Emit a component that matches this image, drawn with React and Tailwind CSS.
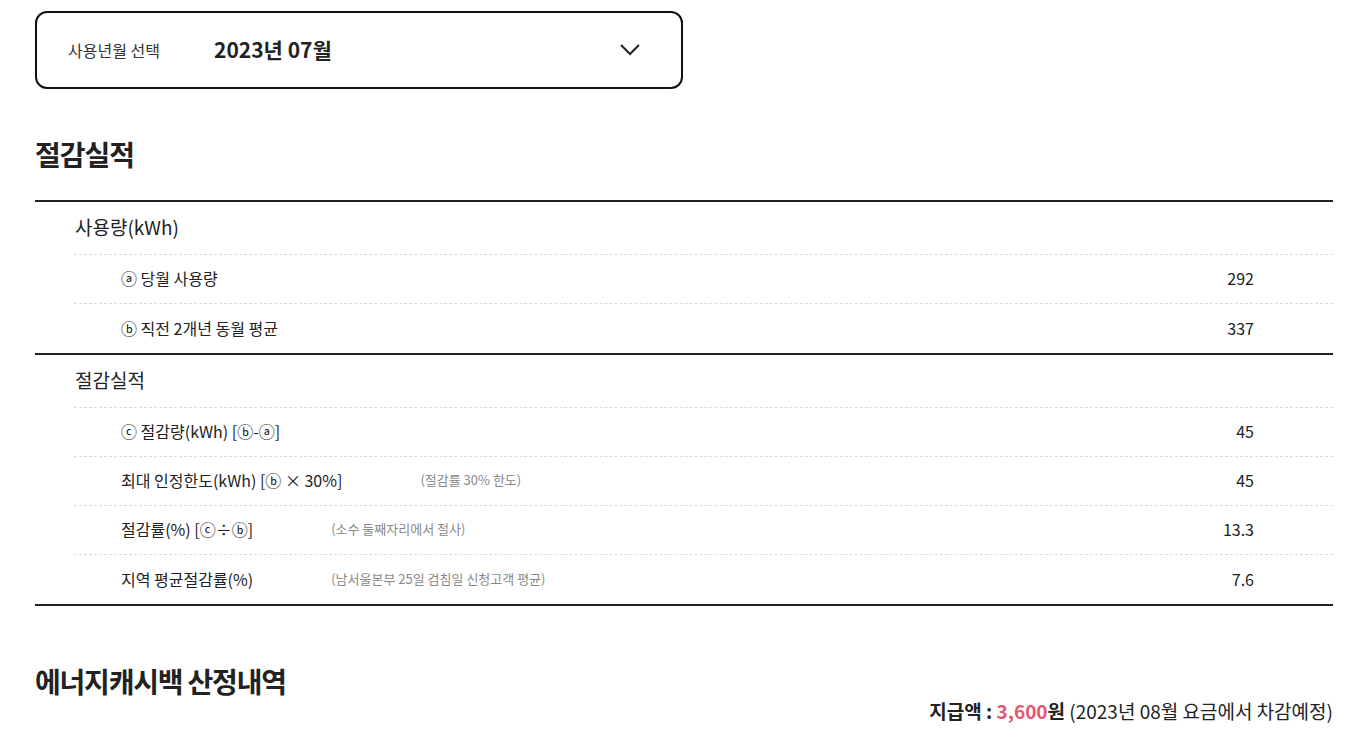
import React from "react";

const font = { fontFamily: '"Noto Sans CJK KR", "Noto Sans", sans-serif' };

const usageRows = [
  { label: "ⓐ 당월 사용량", value: "292" },
  { label: "ⓑ 직전 2개년 동월 평균", value: "337" },
];

const savingRows = [
  { label: "ⓒ 절감량(kWh) [ⓑ-ⓐ]", value: "45" },
  { label: "최대 인정한도(kWh) [ⓑ × 30%]", note: "(절감률 30% 한도)", value: "45" },
  { label: "절감률(%) [ⓒ÷ⓑ]", note: "(소수 둘째자리에서 절사)", value: "13.3" },
  { label: "지역 평균절감률(%)", note: "(남서울본부 25일 검침일 신청고객 평균)", value: "7.6" },
];

const Row = ({ row, last }) => (
  <div
    className={
      "ml-[39px] flex items-center border-t border-dashed border-[#dcdcdc] pb-[2px] pl-[47px] pr-[79px] text-[16px] text-[#222] " +
      (last ? "h-[50px]" : "h-[49px]")
    }
  >
    <span>{row.label}</span>
    {row.note && <span className="ml-[78px] text-[13px] text-[#888]">{row.note}</span>}
    <span className="ml-auto">{row.value}</span>
  </div>
);

const Section = ({ title, rows }) => (
  <div className="border-t-2 border-[#222]">
    <div className="flex h-[52px] items-center pb-[2px] pl-[40px] text-[19px] text-[#222]">{title}</div>
    {rows.map((r, i) => (
      <Row key={i} row={r} last={i === rows.length - 1} />
    ))}
  </div>
);

export default function App() {
  return (
    <div className="min-h-screen bg-white pl-[35px] pr-[24px] pt-[11px]" style={font}>
      <div className="flex h-[78px] w-[648px] items-center rounded-[12px] border-2 border-[#111] pl-[31px] pr-[40px]">
        <span className="w-[146px] text-[16px] text-[#333]">사용년월 선택</span>
        <span className="text-[21px] font-bold text-[#222]">2023년 07월</span>
        <svg className="ml-auto" width="22" height="14" viewBox="0 0 22 14" fill="none">
          <path d="M2 2l9 9 9-9" stroke="#222" strokeWidth="2" />
        </svg>
      </div>

      <h2 className="mt-[45px] text-[28px] font-bold leading-[40px] text-[#222] tracking-[-1px]">절감실적</h2>

      <div className="mt-[26px] border-b-2 border-[#222]">
        <Section title="사용량(kWh)" rows={usageRows} />
        <Section title="절감실적" rows={savingRows} />
      </div>

      <h2 className="mt-[55px] text-[28px] font-bold leading-[40px] text-[#222] tracking-[-1.2px]">에너지캐시백 산정내역</h2>
      <div className="-mt-[4px] text-right text-[19px] text-[#222]">
        <span className="font-bold">지급액 : </span>
        <span className="font-bold text-[#e8556f]">3,600</span>
        <span className="font-bold">원</span>
        <span> (2023년 08월 요금에서 차감예정)</span>
      </div>
    </div>
  );
}
